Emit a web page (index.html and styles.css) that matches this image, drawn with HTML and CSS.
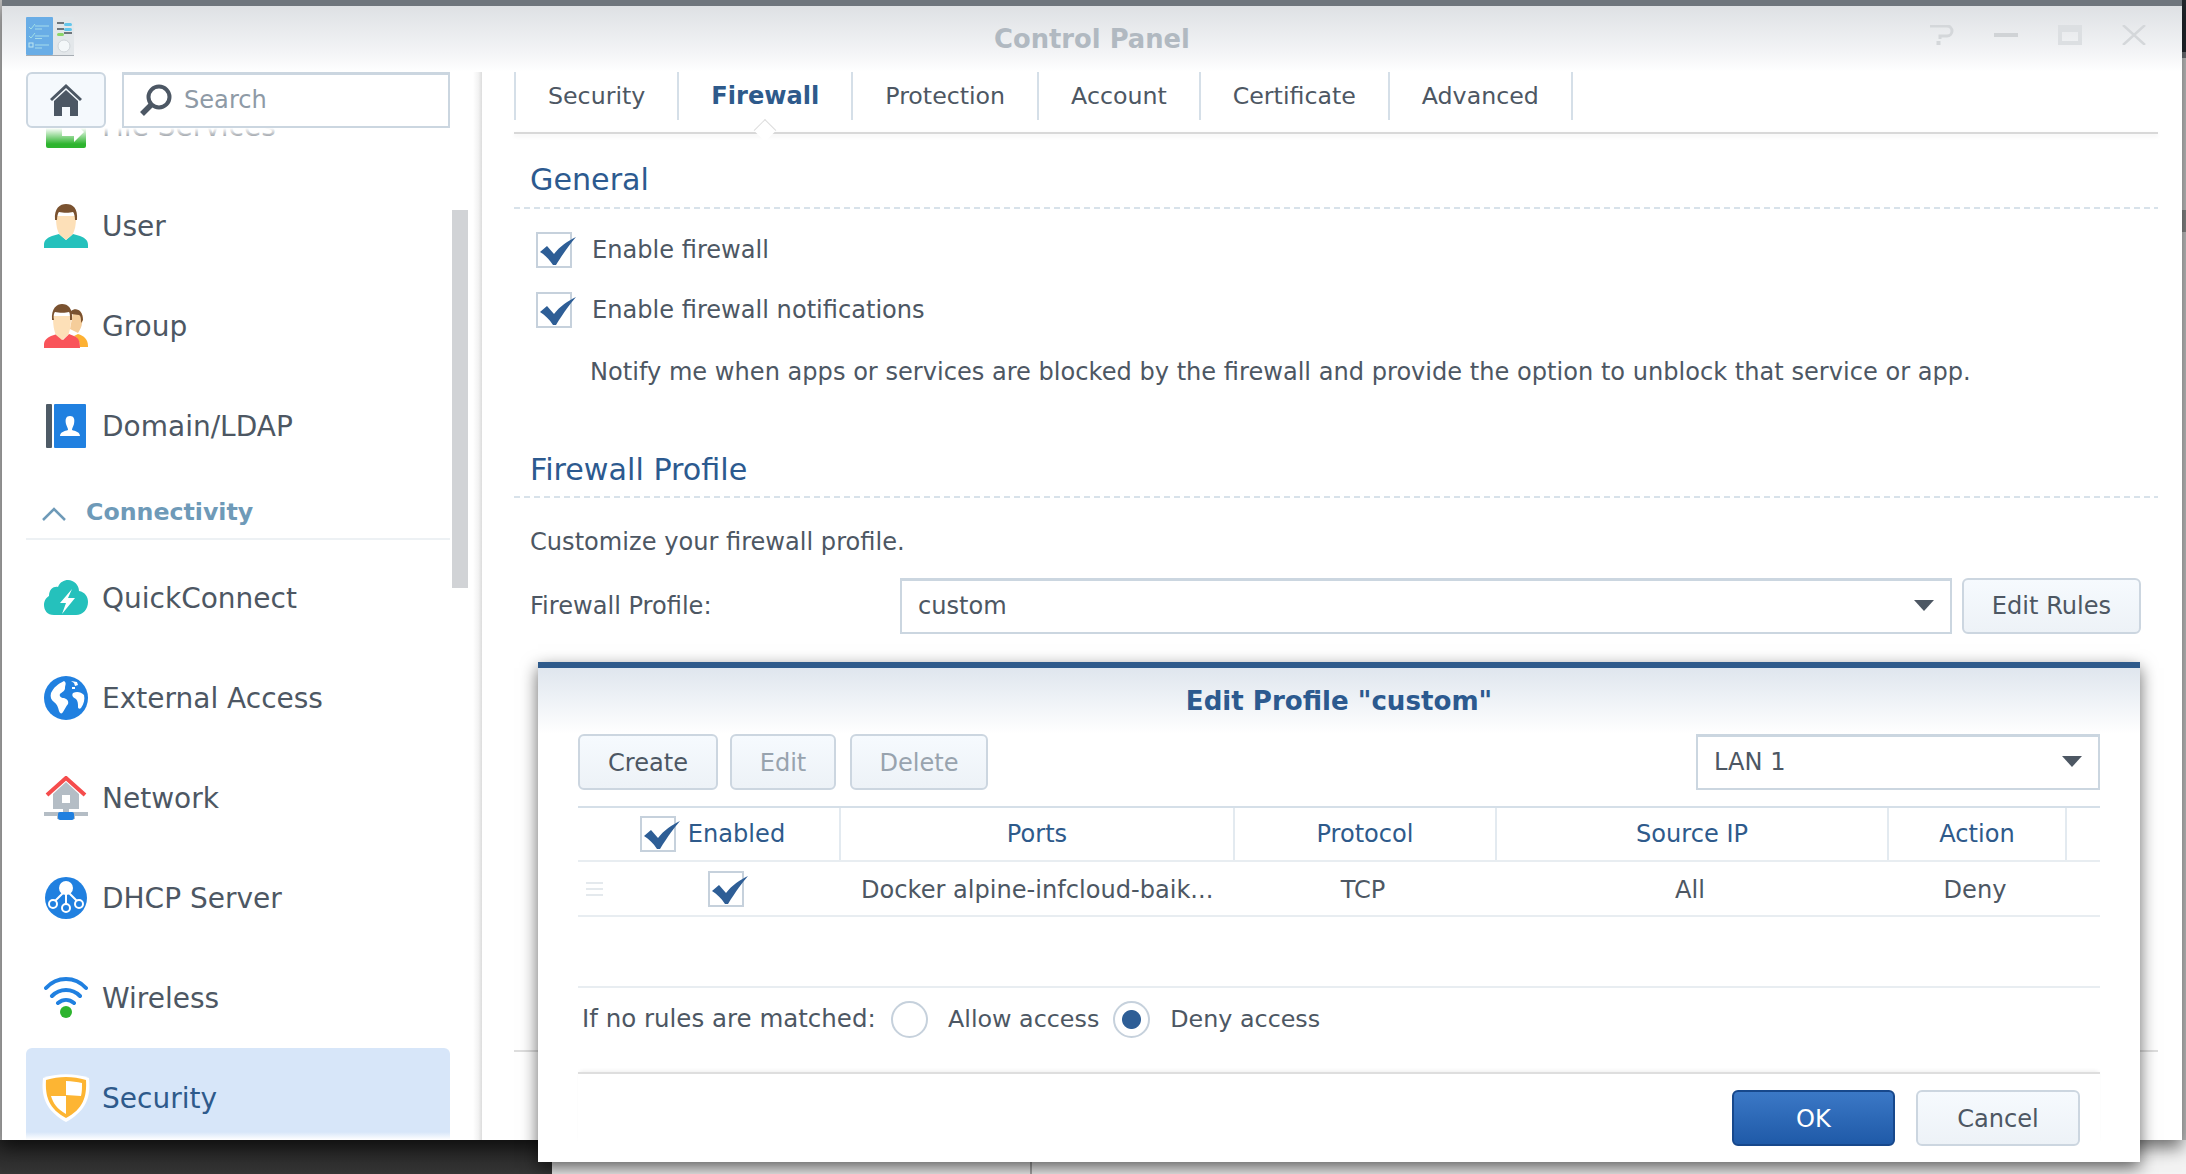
FILE: index.html
```html
<!DOCTYPE html>
<html lang="en">
<head>
<meta charset="utf-8">
<title>Control Panel</title>
<link rel="stylesheet" href="styles.css">
</head>
<body>
<div class="desktop">
  <div class="under-dark"></div>
  <div class="under-light"><span class="under-line"></span></div>
  <div class="edge-strip"></div>

  <main class="window">
    <header class="titlebar">
      <svg class="app-logo" viewBox="0 0 48 39">
        <rect width="48" height="39" rx="1" fill="#e3e7ea"/>
        <rect width="27" height="38" rx="1" fill="#69ade6"/>
        <rect y="38" width="48" height="1" fill="#a7adb3"/>
        <path d="M3 10l2 2 4-5M3 19l2 2 4-5" stroke="#9fe0e8" fill="none"/>
        <rect x="3" y="26" width="4" height="4" fill="none" stroke="#bfe8f0"/>
        <path d="M9 9h14M9 12h7M9 19h14M9 21.500h7M9 28h14M9 31h7" stroke="#a5dcec"/>
        <path d="M31 6h7M31 12h7M38 16h8" stroke="#6e767c" stroke-width="2"/>
        <rect x="38" y="6" width="8" height="3" rx="1.500" fill="#63c6ec"/>
        <rect x="38" y="11" width="8" height="3" rx="1.500" fill="#63c6ec"/>
        <rect x="31" y="16" width="7" height="3" rx="1.500" fill="#8bd56a"/>
        <circle cx="38" cy="29" r="6" fill="#f3f7f9" stroke="#cfd5d9"/>
      </svg>
      <h1 class="title">Control Panel</h1>
      <div class="win-controls">
        <svg class="win-btn" viewBox="0 0 24 20"><path d="M0 1h17a5 5 0 0 1 0 10h-7v3" fill="none" stroke="#d4d7da" stroke-width="3"/><rect x="6.500" y="16" width="4" height="4" fill="#d4d7da"/></svg>
        <svg class="win-btn" viewBox="0 0 24 20"><rect y="8" width="24" height="4" fill="#d0d3d6"/></svg>
        <svg class="win-btn" viewBox="0 0 24 20"><path d="M0 0h24v20H0z M4 7v9h16V7z" fill="#dcdfe2" fill-rule="evenodd"/></svg>
        <svg class="win-btn" viewBox="0 0 24 20"><path d="M1 0l22 20M23 0L1 20" stroke="#d4d7da" stroke-width="2.500"/></svg>
      </div>
    </header>

    <div class="window-body">
      <aside class="sidebar">
        <div class="side-top">
          <button class="home-btn">
            <svg class="home-icon" viewBox="0 0 32 32"><path d="M0 15L16 0l16 15-2 2L16 4 2 17z" fill="#4c5764"/><path d="M4 17L16 6l12 11v15H20V23h-8v9H4z" fill="#4c5764"/></svg>
          </button>
          <div class="search">
            <svg class="search-icon" viewBox="0 0 32 32"><circle cx="19" cy="13" r="10.500" fill="none" stroke="#4c5764" stroke-width="4"/><path d="M11 21L2 30" stroke="#4c5764" stroke-width="5.500"/></svg>
            <span class="search-text">Search</span>
          </div>
        </div>

        <nav class="side-list">
          <div class="side-item side-item-first">
            <svg class="side-icon" viewBox="0 0 44 44"><rect x="2" width="40" height="44" rx="2" fill="#2db42e"/><path d="M18 24h12v-6l10 10-10 10v-6H18z" fill="#fff"/><path d="M2 10L12 20H2z" fill="#fff"/></svg>
            <span>File Services</span>
          </div>
          <div class="side-item">
            <svg class="side-icon" viewBox="0 0 44 44"><path d="M0 44v-3c0-5 3-7 8-9l7-2 7 6 7-6 7 2c5 2 8 4 8 9v3z" fill="#25c1bc"/><path d="M12 12h20c0 9-1 15-4 19l-6 5-6-5c-3-4-4-10-4-19z" fill="#fde0b8"/><path d="M11 16C10 4 16 0 22 0c7 0 12 4 11 16l-2 0c0-4-1-7-2-8-3 1-10 1-14 0-1 1-2 4-2 8z" fill="#7a5230"/></svg>
            <span>User</span>
          </div>
          <div class="side-item">
            <svg class="side-icon" viewBox="0 0 44 44"><path d="M30 6c5-1 9 2 9 10l-1 3c0 3-2 7-4 10l-8-4 3-16z" fill="#f5cd9a"/><path d="M27 7c5-4 12-1 12 9l-2 3c0-4 0-7-2-8-3 0-5-1-8-1z" fill="#7a5230"/><path d="M34 30c6 2 10 5 10 12v1h-8c0-5-2-9-6-11z" fill="#fdb133"/><path d="M0 44v-3c0-5 3-7 7-9l6-2 6 6 6-6 5 2c5 2 6 5 6 12z" fill="#f9545a"/><path d="M9 12h18c0 9-1 15-3 19l-6 5-6-5c-2-4-3-10-3-19z" fill="#fde0b8"/><path d="M8 16C7 4 13 0 18 0c6 0 11 4 10 16h-2c0-4 0-7-1-8-3 1-10 1-14 0-1 1-2 4-1 8z" fill="#7a5230"/></svg>
            <span>Group</span>
          </div>
          <div class="side-item">
            <svg class="side-icon" viewBox="0 0 44 44"><rect x="2" width="6" height="44" rx="1" fill="#4e5b66"/><rect x="10" width="32" height="44" rx="1" fill="#2080e0"/><path d="M26 12c4 0 5 3 4 8-1 3-2 4-2 6 3 1 8 2 8 6H16c0-4 5-5 8-6 0-2-1-3-2-6-1-5 0-8 4-8z" fill="#fff"/></svg>
            <span>Domain/LDAP</span>
          </div>

          <div class="side-group">
            <svg class="chevron" viewBox="0 0 24 14"><path d="M1 13L12 2l11 11" fill="none" stroke="#6e9ab8" stroke-width="2.500"/></svg>
            <span>Connectivity</span>
          </div>

          <div class="side-item">
            <svg class="side-icon" viewBox="0 0 44 44"><path d="M10 39C3 39 0 34 0 29c0-5 3-8 5-9 0-7 5-10 9-9 2-5 6-7 10-7 6 0 11 5 11 11 6 1 9 6 9 11 0 7-5 13-12 13z" fill="#25c1bc"/><path d="M28 13l-12 14h6l-4 11 13-16h-7l4-9z" fill="#fff"/></svg>
            <span>QuickConnect</span>
          </div>
          <div class="side-item">
            <svg class="side-icon" viewBox="0 0 44 44"><circle cx="22" cy="22" r="22" fill="#2080e0"/><path d="M20 5c-6 3-10 6-13 12-1 4 0 7 3 9 3 2 4 5 5 9 1 3 3 3 4 1 2-3 3-6 5-8 1-3-1-5-4-6-3 0-5-2-4-4 2-2 5-3 5-6 0-3 2-5-1-7z" fill="#fff"/><path d="M29 17c4-2 8-1 11 2 1 4 0 9-3 13-1 1-3 1-3-1 0-3 0-6-2-8-2-1-5-3-3-6zM27 5l3 2 1 3 3-1-1-3zM28 11h3v2h-3z" fill="#fff"/></svg>
            <span>External Access</span>
          </div>
          <div class="side-item">
            <svg class="side-icon" viewBox="0 0 44 44"><path d="M9 18L22 6l13 12v15H25v3h19v4H31v3H13v-3H0v-4h19v-3H9z" fill="#b4bdc5"/><rect x="18" y="19" width="8" height="8" fill="#fff"/><path d="M3 19L22 2l19 17" fill="none" stroke="#f54c4c" stroke-width="4"/><rect x="14" y="36" width="16" height="8" rx="2" fill="#2080e0"/></svg>
            <span>Network</span>
          </div>
          <div class="side-item">
            <svg class="side-icon" viewBox="0 0 44 44"><circle cx="22" cy="22" r="21" fill="#2080e0"/><circle cx="22" cy="12" r="7" fill="#fff"/><path d="M22 15v14M19 17L11 25M25 17l8 8" stroke="#fff" stroke-width="2"/><circle cx="9" cy="28" r="4" fill="#2080e0" stroke="#fff" stroke-width="2"/><circle cx="22" cy="32" r="4" fill="#2080e0" stroke="#fff" stroke-width="2"/><circle cx="35" cy="28" r="4" fill="#2080e0" stroke="#fff" stroke-width="2"/></svg>
            <span>DHCP Server</span>
          </div>
          <div class="side-item">
            <svg class="side-icon" viewBox="0 0 44 44"><path d="M2 12C13 0 31 0 42 12M8 20c8-8 20-8 28 0M14 27c5-4 11-4 16 0" fill="none" stroke="#2080e0" stroke-width="4" stroke-linecap="round"/><circle cx="22" cy="36" r="6" fill="#2db42e"/></svg>
            <span>Wireless</span>
          </div>
          <div class="side-item side-item-active">
            <svg class="side-icon shield" viewBox="0 0 48 48"><path d="M1 4c14-5 32-5 46 0 2 18-2 32-23 44C3 36-1 22 1 4z" fill="#fff"/><path d="M4 6c13-4 27-4 40 0 1 17-3 29-20 38C7 35 3 23 4 6z" fill="#fdb533"/><path d="M24 7c6 0 11 1 16 2 0 5 0 9-1 13l-15-1zM9 22l15 0v18c-9-5-13-11-15-18z" fill="#fff"/></svg>
            <span>Security</span>
          </div>
        </nav>
        <div class="scroll-thumb"></div>
      </aside>

      <section class="content">
        <nav class="tabs">
          <span class="tab tab-first">Security</span>
          <span class="tab tab-active">Firewall</span>
          <span class="tab">Protection</span>
          <span class="tab">Account</span>
          <span class="tab">Certificate</span>
          <span class="tab">Advanced</span>
        </nav>
        <div class="tab-rule"></div>

        <h2 class="section-head">General</h2>
        <div class="dash"></div>
        <label class="check-row check-row-a">
          <span class="check"><svg class="tick" viewBox="0 0 36 28"><path d="M0 15L7 9l7 8C20 9 28 4 36 0 30 7 24 15 16 28h-3C9 22 5 18 0 15z" fill="#2e5e96"/></svg></span>
          <span>Enable firewall</span>
        </label>
        <label class="check-row check-row-b">
          <span class="check"><svg class="tick" viewBox="0 0 36 28"><path d="M0 15L7 9l7 8C20 9 28 4 36 0 30 7 24 15 16 28h-3C9 22 5 18 0 15z" fill="#2e5e96"/></svg></span>
          <span>Enable firewall notifications</span>
        </label>
        <p class="notify">Notify me when apps or services are blocked by the firewall and provide the option to unblock that service or app.</p>

        <h2 class="section-head section-head-2">Firewall Profile</h2>
        <div class="dash"></div>
        <p class="customize">Customize your firewall profile.</p>
        <div class="profile-row">
          <span class="profile-label">Firewall Profile:</span>
          <div class="select select-profile"><span>custom</span><i class="arrow"></i></div>
          <button class="btn btn-rules">Edit Rules</button>
        </div>
        <div class="behind-rule"></div>
      </section>
    </div>
  </main>

  <div class="dialog">
    <h3 class="dialog-title">Edit Profile "custom"</h3>
    <div class="dialog-body">
      <div class="toolbar">
        <button class="btn btn-create">Create</button>
        <button class="btn btn-edit is-disabled">Edit</button>
        <button class="btn btn-delete is-disabled">Delete</button>
        <div class="select select-lan"><span>LAN 1</span><i class="arrow"></i></div>
      </div>

      <div class="grid grid-head">
        <div class="cell cell-enabled">
          <span class="check"><svg class="tick" viewBox="0 0 36 28"><path d="M0 15L7 9l7 8C20 9 28 4 36 0 30 7 24 15 16 28h-3C9 22 5 18 0 15z" fill="#2e5e96"/></svg></span>
          <span>Enabled</span>
        </div>
        <div class="cell">Ports</div>
        <div class="cell">Protocol</div>
        <div class="cell">Source IP</div>
        <div class="cell">Action</div>
        <div class="cell cell-last"></div>
      </div>
      <div class="grid grid-row">
        <div class="cell cell-handle">
          <span class="handle"></span>
          <span class="check"><svg class="tick" viewBox="0 0 36 28"><path d="M0 15L7 9l7 8C20 9 28 4 36 0 30 7 24 15 16 28h-3C9 22 5 18 0 15z" fill="#2e5e96"/></svg></span>
        </div>
        <div class="cell cell-ports">Docker alpine-infcloud-baik...</div>
        <div class="cell cell-shift">TCP</div>
        <div class="cell cell-shift">All</div>
        <div class="cell cell-shift">Deny</div>
        <div class="cell"></div>
      </div>

      <div class="match-row">
        <span class="match-label">If no rules are matched:</span>
        <span class="radio"></span>
        <span class="radio-text">Allow access</span>
        <span class="radio radio-on"></span>
        <span class="radio-text">Deny access</span>
      </div>

      <div class="dialog-foot">
        <button class="btn btn-ok">OK</button>
        <button class="btn btn-cancel">Cancel</button>
      </div>
    </div>
  </div>
</div>
</body>
</html>
```

FILE: styles.css
```css
* { box-sizing: border-box; }
html, body { margin: 0; padding: 0; }
body {
  width: 2186px;
  height: 1174px;
  overflow: hidden;
  font-family: "DejaVu Sans", "Liberation Sans", sans-serif;
  font-size: 24.1px;
  color: #4d5763;
  background: #bdbdbd;
}
h1, h2, h3, p { margin: 0; font-weight: normal; }
button { font: inherit; }

.desktop { position: relative; width: 2186px; height: 1174px; overflow: hidden; }

/* what shows around the window */
.under-dark {
  position: absolute; left: 0; top: 1140px; width: 552px; height: 34px;
  background: linear-gradient(#232323, #353535);
}
.under-light {
  position: absolute; left: 552px; top: 1140px; width: 1634px; height: 34px;
  background: #f3f3f3;
}
.under-line {
  position: absolute; left: 478px; top: 0; width: 2px; height: 34px; background: #a9a9a9;
}
.edge-strip {
  position: absolute; left: 2182px; top: 0; width: 4px; height: 1140px;
  background: linear-gradient(#23282e 0 52px, #6f7277 52px 58px, #c6c6c6 58px 210px, #8a8a8a 210px 232px, #c6c6c6 232px);
}

/* window */
.window {
  position: absolute; left: 2px; top: 0; width: 2180px; height: 1140px;
  display: flex; flex-direction: column;
  background: #fff;
  box-shadow: 0 8px 16px rgba(0, 0, 0, .55);
}
.titlebar {
  flex: none; height: 72px;
  border-top: 6px solid #6f767d;
  background: linear-gradient(#dee1e4, #f3f4f6 70%, #fff);
  display: flex; align-items: center;
  position: relative;
}
.app-logo { width: 48px; height: 39px; margin: -5px 0 0 24px; flex: none; }
.title {
  position: absolute; left: 0; right: 0; top: 15px;
  text-align: center; font-size: 25.8px; line-height: 36px; font-weight: bold; color: #b1b9c1;
}
.win-controls { margin: -8px 0 0 auto; padding-right: 36px; display: flex; gap: 40px; }
.win-btn { width: 24px; height: 20px; display: block; }

.window-body { flex: 1; min-height: 0; display: flex; }

/* sidebar */
.sidebar {
  position: relative; flex: none; width: 480px;
  display: flex; flex-direction: column;
  padding-left: 24px;
}
.sidebar::after {
  content: ""; position: absolute; right: 0; top: 0; bottom: 0; width: 9px;
  background: linear-gradient(90deg, #fff, #f2f2f2 60%, #dcdcdc);
}
.side-top { flex: none; position: relative; z-index: 2; display: flex; gap: 16px; height: 56px; }
.home-btn {
  width: 80px; height: 56px; padding: 0; display: flex; align-items: center; justify-content: center;
  background: #f5f9fd; border: 2px solid #cbd6e0; border-radius: 6px;
}
.home-icon { width: 32px; height: 32px; display: block; }
.search {
  width: 328px; height: 56px; background: #fff;
  border: 2px solid #cbd6e0; border-top-width: 3px;
  display: flex; align-items: center; padding: 0 0 2px 16px; gap: 12px;
}
.search-icon { width: 32px; height: 32px; flex: none; }
.search-text { color: #8e9aa6; }

.side-list {
  position: relative; flex: 1; min-height: 0; width: 424px; overflow: hidden;
  font-size: 28px;
}
.side-list::before {
  content: ""; position: absolute; z-index: 1; left: 0; right: 0; top: 0; height: 16px;
  background: linear-gradient(#fff, rgba(255, 255, 255, 0));
}
.side-list::after {
  content: ""; position: absolute; z-index: 1; left: 0; right: 0; bottom: 0; height: 8px;
  background: linear-gradient(rgba(255, 255, 255, 0), #fff);
}
.side-item { height: 100px; display: flex; align-items: center; gap: 14px; padding-left: 18px; }
.side-item-first { margin-top: -52px; }
.side-icon { width: 44px; height: 44px; flex: none; display: block; }
.side-item-active { background: #d7e6f9; border-radius: 6px 6px 0 0; color: #2e5a8b; }
.shield { width: 48px; height: 48px; margin: 0 -2px; }
.side-group {
  height: 64px; margin-bottom: 8px; padding: 24px 0 0 16px;
  display: flex; gap: 20px; align-items: flex-start;
  border-bottom: 2px solid #edf1f4;
  font-size: 23.7px; line-height: 24px; font-weight: bold; color: #6e9ab8;
}
.chevron { width: 24px; height: 14px; margin-top: 7px; flex: none; }
.scroll-thumb {
  position: absolute; z-index: 2; left: 450px; top: 138px; width: 16px; height: 378px; background: #d1d3d6;
}

/* content */
.content { flex: 1; min-width: 0; display: flex; flex-direction: column; padding: 0 24px 0 32px; }
.tabs { flex: none; display: flex; height: 48px; font-size: 23.7px; }
.tab {
  display: flex; align-items: center; padding: 0 32px;
  border-right: 2px solid #d5dfe8; position: relative; white-space: nowrap;
}
.tab-first { border-left: 2px solid #d5dfe8; }
.tab-active { font-weight: bold; font-size: 24.1px; color: #2e5a8b; }
.tab-active::after {
  content: ""; position: absolute; left: 50%; bottom: -14px; width: 15px; height: 15px;
  margin-left: -8px; background: #fff; transform: rotate(45deg) translate(3px, 3px);
  border: solid #dcdcdc; border-width: 1px 0 0 1px; z-index: 1;
}
.tab-rule {
  flex: none; height: 2px; margin-top: 12px; background: #d8d8d8;
  box-shadow: 0 2px 4px rgba(0, 0, 0, .08);
}
.section-head {
  flex: none; padding: 26px 0 0 16px; height: 73px;
  font-size: 30.2px; line-height: 40px; color: #2c5a8f;
}
.section-head-2 { padding-top: 60px; height: 106px; }
.dash {
  flex: none; height: 2px;
  background: repeating-linear-gradient(90deg, #d8e2ea 0 6px, transparent 6px 10px);
}
.check-row { flex: none; display: flex; align-items: center; gap: 20px; height: 36px; padding-left: 22px; }
.check-row-a { margin-top: 23px; }
.check-row-b { margin-top: 24px; }
.check {
  position: relative; display: block; width: 36px; height: 36px; flex: none;
  background: #fff; border: 2px solid #c6d1dc;
}
.tick { position: absolute; left: 2px; top: 3px; width: 36px; height: 28px; display: block; }
.notify { flex: none; margin-top: 26px; padding-left: 76px; line-height: 36px; white-space: nowrap; }
.customize { flex: none; margin-top: 26px; padding-left: 16px; line-height: 36px; }
.profile-row { flex: none; display: flex; align-items: center; height: 56px; margin-top: 18px; padding: 0 17px 0 16px; }
.profile-label { width: 370px; flex: none; }
.select {
  height: 56px; display: flex; align-items: center; justify-content: space-between;
  background: #fff; border: 2px solid #cbd6e0; border-top-width: 3px;
  padding: 0 16px 2px 16px;
}
.select-profile { flex: 1; margin-right: 10px; }
.arrow {
  display: block; width: 0; height: 0;
  border-left: 10px solid transparent; border-right: 10px solid transparent; border-top: 11px solid #4d5763;
}
.btn {
  height: 56px; padding: 0; text-align: center; color: #4d5763;
  background: linear-gradient(#f6fafe, #edf2f7);
  border: 2px solid #ccd6e0; border-radius: 6px;
}
.btn-rules { width: 179px; flex: none; }
.behind-rule { flex: none; height: 2px; margin-top: 416px; background: #dedede; }

/* dialog */
.dialog {
  position: absolute; left: 538px; top: 662px; width: 1602px; height: 500px;
  background: #fff; border-top: 6px solid #2e5a8b;
  box-shadow: 0 6px 16px rgba(0, 0, 0, .6);
  display: flex; flex-direction: column;
}
.dialog-title {
  flex: none; height: 66px; line-height: 66px; text-align: center;
  font-size: 26.1px; font-weight: bold; color: #2c5a8f;
  background: linear-gradient(#dfe6ee, #fff);
}
.dialog-body { flex: 1; display: flex; flex-direction: column; padding: 0 40px; }
.toolbar { flex: none; display: flex; height: 56px; }
.toolbar .btn { padding-top: 2px; }
.btn-create { width: 140px; }
.btn-edit { width: 106px; margin-left: 12px; }
.btn-delete { width: 138px; margin-left: 14px; }
.is-disabled { color: #98a3ae; }
.select-lan { width: 404px; margin-left: auto; }
.grid {
  flex: none; display: grid;
  grid-template-columns: 263px 394px 262px 392px 178px 33px;
}
.grid-head {
  height: 56px; margin-top: 16px;
  border-top: 2px solid #d5dfe8; border-bottom: 2px solid #e8edf1;
  color: #2e5a8b;
}
.grid-row { height: 55px; border-bottom: 2px solid #e8edf1; }
.cell { display: flex; align-items: center; justify-content: center; min-width: 0; white-space: nowrap; }
.grid-head .cell { border-right: 2px solid #e3eaf0; }
.grid-head .cell-last { border-right: 0; }
.cell-enabled { gap: 12px; padding-left: 8px; }
.cell-handle { justify-content: flex-start; padding-left: 8px; gap: 105px; }
.handle {
  display: block; width: 17px; height: 14px; flex: none;
  border-top: 2px solid #e4e9ed; border-bottom: 2px solid #e4e9ed;
  background: linear-gradient(#e4e9ed, #e4e9ed) center / 100% 2px no-repeat;
}
.cell-ports { justify-content: flex-start; padding: 2px 0 0 20px; }
.cell-shift { padding: 2px 6px 0 0; }
.match-row {
  flex: none; height: 86px; margin-top: 69px; padding: 13px 0 0 4px;
  display: flex; align-items: flex-start; line-height: 36px;
  border-top: 2px solid #e8edf1;
}
.match-label { width: 309px; flex: none; font-size: 24.5px; }
.radio {
  display: block; width: 37px; height: 37px; border-radius: 50%; flex: none;
  border: 2px solid #c6d1dc; background: #fff;
}
.radio-on { background: radial-gradient(circle, #2e5e96 0 9px, #fff 10px); margin-left: 14px; }
.radio-text { margin-left: 20px; font-size: 23.8px; }
.dialog-foot {
  flex: none; display: flex; justify-content: flex-end; gap: 21px; height: 74px;
  padding: 16px 20px 0 0;
  border-top: 2px solid #dedede;
  box-shadow: 0 -3px 4px -2px rgba(0, 0, 0, .07);
}
.dialog-foot .btn { padding-top: 2px; }
.btn-ok {
  width: 163px; color: #fff;
  background: linear-gradient(#3b78c6, #1f5aa8); border-color: #17488c;
}
.btn-cancel { width: 164px; }
```
